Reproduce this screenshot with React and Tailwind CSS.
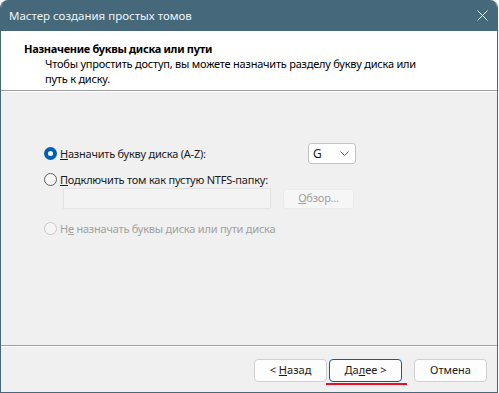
import React from "react";

const font = { fontFamily: '"Noto Sans", "Open Sans", sans-serif' };

const Radio = ({ checked, disabled }) => {
  if (checked) {
    return (
      <span className="w-[13px] h-[13px] rounded-full bg-[#005fb8] flex items-center justify-center shrink-0">
        <span className="w-[5px] h-[5px] rounded-full bg-white" />
      </span>
    );
  }
  return (
    <span
      className={
        disabled
          ? "w-[13px] h-[13px] rounded-full border border-[#c9c9c9] bg-[#f5f5f5] shrink-0"
          : "w-[13px] h-[13px] rounded-full border border-[#5f5f5f] bg-[#f7f7f7] shrink-0"
      }
    />
  );
};

const Btn = ({ children, primary }) => (
  <div
    className={
      primary
        ? "relative w-[73px] h-[23px] rounded-[4px] border border-[#005fb8] bg-[#fdfdfd] flex items-center justify-center text-[11px] text-[#1b1b1b]"
        : "w-[73px] h-[23px] rounded-[4px] border border-[#d0d0d0] bg-[#fdfdfd] flex items-center justify-center text-[11px] text-[#1b1b1b]"
    }
  >
    {children}
    {primary && <span className="absolute left-[-4px] right-[-6px] bottom-[-4px] h-[2px] bg-[#e81123]" />}
  </div>
);

export default function App() {
  return (
    <div className="w-[499px] h-[393px] bg-white" style={font}>
      <div className="w-[498px] h-[393px] flex flex-col border-x border-b border-[#45697a] rounded-t-[8px] overflow-hidden">
        {/* title bar */}
        <div className="h-[31px] bg-[#45697a] flex items-center justify-between pl-[8px] pr-[9px] shrink-0">
          <span className="text-[11.5px] text-[#eef3f5]">Мастер создания простых томов</span>
          <svg width="11" height="11" viewBox="0 0 11 11">
            <path d="M0.5 0.5L10.5 10.5M10.5 0.5L0.5 10.5" stroke="#ffffff" strokeWidth="1" />
          </svg>
        </div>

        {/* header */}
        <div className="h-[59px] bg-white pt-[10px] pl-[23px] shrink-0">
          <div className="text-[11px] leading-[15px] font-bold tracking-[-0.3px] text-black">
            Назначение буквы диска или пути
          </div>
          <div className="pl-[21px] text-[11px] leading-[15px] tracking-[-0.22px] text-black whitespace-nowrap">
            Чтобы упростить доступ, вы можете назначить разделу букву диска или
            <br />
            путь к диску.
          </div>
        </div>
        <div className="h-px bg-[#a0a0a0] shrink-0" />
        <div className="h-px bg-white shrink-0" />

        {/* body */}
        <div className="h-[253px] bg-[#f0f0f0] pt-[51px] pl-[43px] text-[11px] tracking-[-0.22px] text-[#1b1b1b] shrink-0">
          <div className="flex items-center h-[21px]">
            <div className="flex items-center gap-[3px] w-[264px]">
              <Radio checked />
              <span className="leading-[15px]">
                <span className="underline">Н</span>азначить букву диска (A-Z):
              </span>
            </div>
            <div className="w-[48px] h-[21px] bg-white border border-[#c4c4c4] rounded-[3px] flex items-center justify-between pl-[4px] pr-[6px] text-[12px]">
              <span>G</span>
              <svg width="9" height="5" viewBox="0 0 9 5">
                <path d="M0.5 0.5L4.5 4.5L8.5 0.5" fill="none" stroke="#5f5f5f" strokeWidth="1" />
              </svg>
            </div>
          </div>

          <div className="flex items-center gap-[3px] mt-[8px] h-[15px]">
            <Radio />
            <span className="leading-[15px]">
              <span className="underline">П</span>одключить том как пустую NTFS-папку:
            </span>
          </div>

          <div className="flex items-center mt-[1px] pl-[19px]">
            <div className="w-[208px] h-[21px] border border-[#e3e3e3] bg-[#f3f3f3]" />
            <div className="ml-[12px] w-[71px] h-[20px] rounded-[3px] border border-[#ebebeb] bg-[#f6f6f6] flex items-center justify-center text-[#a0a0a0]">
              <span>
                <span className="underline">О</span>бзор...
              </span>
            </div>
          </div>

          <div className="flex items-center gap-[3px] mt-[12px] h-[15px] text-[#a0a0a0]">
            <Radio disabled />
            <span className="leading-[15px]">
              Н<span className="underline">е</span> назначать буквы диска или пути диска
            </span>
          </div>
        </div>
        <div className="h-px bg-[#a0a0a0] shrink-0" />
        <div className="h-px bg-white shrink-0" />

        {/* footer */}
        <div className="flex-1 bg-[#f0f0f0] flex justify-end items-start pt-[12px] pr-[10px]">
          <Btn>
            <span>
              &lt; <span className="underline">Н</span>азад
            </span>
          </Btn>
          <div className="w-[2px]" />
          <Btn primary>
            <span>
              Да<span className="underline">л</span>ее &gt;
            </span>
          </Btn>
          <div className="w-[12px]" />
          <Btn>Отмена</Btn>
        </div>
      </div>
    </div>
  );
}
